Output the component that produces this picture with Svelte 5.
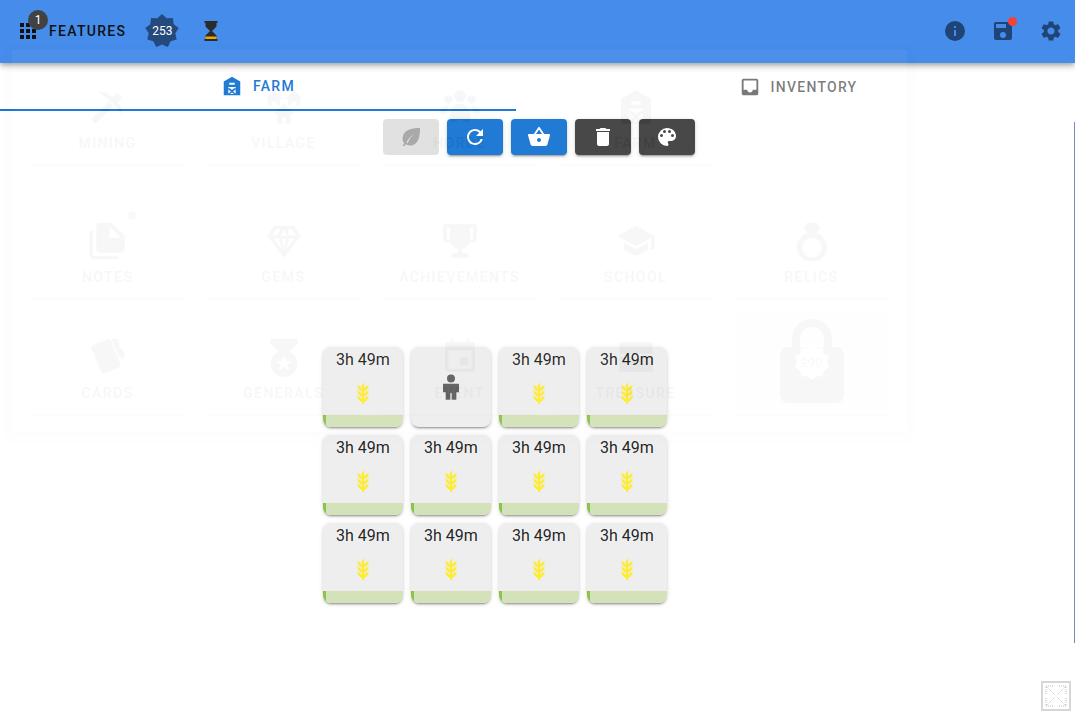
<script>
  const features = [
    { name: 'MINING', icon: 'mining' },
    { name: 'VILLAGE', icon: 'village' },
    { name: 'HORDE', icon: 'horde' },
    { name: 'FARM', icon: 'barn' },
    { name: '', icon: '' },
    { name: 'NOTES', icon: 'notes', dot: true },
    { name: 'GEMS', icon: 'gems' },
    { name: 'ACHIEVEMENTS', icon: 'trophy' },
    { name: 'SCHOOL', icon: 'school' },
    { name: 'RELICS', icon: 'ring' },
    { name: 'CARDS', icon: 'cards' },
    { name: 'GENERALS', icon: 'medal' },
    { name: 'EVENT', icon: 'event' },
    { name: 'TREASURE', icon: 'treasure' }
  ]

  const paths = {
    mining: 'M14.8 6.100 17.500 3.400l3.100 3.100-2.700 2.700c1.600 2 2.700 4.600 3.100 7.800-2.300-3-4.400-5.400-7-7.800-2.400-2.400-4.800-4.300-7.900-6.500 3.200.3 5.700 1.200 7.700 2.900zM12.600 8.800l2.600 2.600L4.600 22 2 19.400z',
    village: 'M6 2 1 7h1.500v4h2V8.500h3V11h2V7H11zM18 2l-5 5h1.500v4h2V8.500h3V11h2V7H23zM12 10l-6 6h2v6h3v-4h2v4h3v-6h2z',
    horde: 'M12 2a3.500 3.500 0 1 1 0 7 3.500 3.500 0 0 1 0-7zM5 5a2.500 2.500 0 1 1 0 5 2.500 2.500 0 0 1 0-5zM19 5a2.500 2.500 0 1 1 0 5 2.500 2.500 0 0 1 0-5zM12 10c3 0 6 3 6 6v3c0 1.500-1 2-2 2-1.500 0-2.500-1.500-4-1.500S9.500 21 8 21c-1 0-2-.5-2-2v-3c0-3 3-6 6-6zM4 11.500c.5 0 1 .1 1.300.2C4.500 13 4 14.500 4 16H0v-1c0-2 2-3.500 4-3.500zM20 11.500c2 0 4 1.500 4 3.500v1h-4c0-1.500-.5-3-1.300-4.300.3-.1.8-.2 1.300-.2z',
    barn: 'M12 2 3 7v15h18V7zM9 8.500h6v2H9zM8 13h8v1.500h-1.600L12 16.300l-2.400-1.800H8zm0 2.500 2.800 2.500L8 20.500zm8 0v5l-2.800-2.500zM12 19l2.200 1.800H9.800z',
    notes: 'M3 6H1v15c0 1.100.9 2 2 2h15v-2H3zM14 1H7C5.900 1 5 1.900 5 3v14c0 1.100.9 2 2 2h13c1.100 0 2-.9 2-2V9zm-1 9V3l7 7z',
    gems: 'M6 3h12l4 6-10 13L2 9zm1 2L4.800 8.500h3.500L9.800 5zm5 0-2 4h4zM5.500 10.500 10.800 17 9 10.500zm5.400 0 1.100 7.500 1.100-7.500zm4.100 0L13.200 17l5.300-6.500zm-.3-2h4.500L16.500 5h-2.300z',
    trophy: 'M2 2h20v8c0 2-1.500 3-3 3h-1.300c-.9 2-2.700 3.300-4.700 3.700V19h4v3H7v-3h4v-2.300C9 16.300 7.200 15 6.300 13H5c-1.500 0-3-1-3-3zm2 2v6c0 .6.400 1 1 1h1V4zm14 0v7h1c.6 0 1-.4 1-1V4z',
    school: 'M5 13.200v4L12 21l7-3.800v-4L12 17zM12 3 1 9l11 6 9-4.900V17h2V9z',
    ring: 'M9 1h6l2 3-2.500 3.400C18.800 8.500 21 12 21 15.500a9 9 0 0 1-18 0C3 12 5.200 8.500 9.500 7.400L7 4zM12 10a6 6 0 1 0 0 12 6 6 0 0 0 0-12z',
    cards: 'M11.500 1.500 3.200 4.900c-.9.400-1.300 1.400-1 2.300l5.600 13.500c.4.900 1.400 1.300 2.300 1l8.300-3.400c.9-.4 1.300-1.400 1-2.300L13.800 2.500c-.4-.9-1.400-1.300-2.300-1zM15.500 2l5 12.200 1.500-3.600c.3-.6 0-1.300-.6-1.600zM14 1l4.800 11.500V3c0-1-1-2-2-2z',
    medal: 'M4 1h16v3l-5 4.500a8 8 0 1 1-6 0L4 4zm8 10-1.400 3.200-3.400.3 2.600 2.200-.8 3.300 3-1.800 3 1.800-.8-3.300 2.600-2.200-3.400-.3z',
    event: 'M17 12h-5v5h5zM16 1v2H8V1H6v2H5C3.900 3 3 3.900 3 5v14c0 1.100.9 2 2 2h14c1.100 0 2-.9 2-2V5c0-1.100-.9-2-2-2h-1V1zm3 18H5V8h14z',
    treasure: 'M4 3h16a2 2 0 0 1 2 2v5H2V5a2 2 0 0 1 2-2zM2 12h8v2h4v-2h8v9H2z'
  }

  const barley = 'M7.33 18.330C6.500 17.170 6.500 15.830 6.500 14.500c1.670 1 3.330 2 4.170 3.170L11 18.230V15.950c-1.500-.9-2.920-1.820-3.670-2.870C6.500 11.920 6.500 10.580 6.500 9.250c1.670 1 3.330 2 4.170 3.170L11 13V10.700C9.500 9.800 8.080 8.880 7.330 7.830 6.500 6.670 6.500 5.330 6.500 4c1.670 1 3.330 2 4.170 3.170.1.140.19.290.27.450-.17-.62-.28-1.200-.29-1.800-.01-1.510.65-3.060 1.310-4.610.69 1.480 1.380 2.970 1.390 4.480.01.630-.1 1.270-.28 1.900.08-.14.160-.28.260-.42C14.170 6 15.830 5 17.500 4c0 1.330 0 2.670-.83 3.830-.75 1.050-2.170 1.970-3.670 2.870V13l.33-.58c.84-1.170 2.500-2.170 4.170-3.170 0 1.330 0 2.670-.83 3.830-.75 1.050-2.170 1.970-3.670 2.870v2.280l.33-.56c.84-1.170 2.500-2.170 4.170-3.170 0 1.330 0 2.670-.83 3.830-.75 1.050-2.170 1.970-3.670 2.870V23h-2v-1.800c-1.500-.9-2.920-1.820-3.670-2.870z'

  // spiky round badge used behind level numbers
  function star(n, cx, cy, outer, inner) {
    const pts = []
    for (let i = 0; i < n * 2; i++) {
      const r = i % 2 ? inner : outer
      const a = (Math.PI * i) / n - Math.PI / 2
      pts.push((cx + r * Math.cos(a)).toFixed(2) + ',' + (cy + r * Math.sin(a)).toFixed(2))
    }
    return pts.join(' ')
  }

  const plots = Array.from({ length: 12 }, (_, i) => ({ id: i, worker: i === 1 }))
</script>

<div class="page">
  <main class="content">
    <nav class="tabs">
      <div class="tab active">
        <svg class="tab-icon" viewBox="0 0 24 24"><path d={paths.barn} /></svg>
        <span>FARM</span>
      </div>
      <div class="tab">
        <svg class="tab-icon" viewBox="0 0 24 24"><path d="M19 3H5a2 2 0 0 0-2 2v14c0 1.100.9 2 2 2h14a2 2 0 0 0 2-2V5a2 2 0 0 0-2-2zm0 12h-4c0 1.660-1.350 3-3 3s-3-1.340-3-3H5V5h14z" /></svg>
        <span>INVENTORY</span>
      </div>
    </nav>

    <div class="actions">
      <button class="btn off" aria-label="fertilize">
        <svg viewBox="0 0 24 24"><path fill-rule="evenodd" d="M21 3C12 3 5 5 3.700 12c-.5 3 .4 5 1.500 6.200L3.500 21h1.800l1.500-1.800c1.600 1 3.700 1.500 6.200 1C19.500 19 21 11 21 3zM7.500 17.500C9 14 11.500 11 15.500 8.500 12 11.500 10 14.500 8.800 18.300z" /></svg>
      </button>
      <button class="btn blue" aria-label="replant">
        <svg viewBox="0 0 24 24"><path d="M17.650 6.350A7.958 7.958 0 0 0 12 4c-4.420 0-7.990 3.580-7.990 8s3.570 8 7.990 8c3.730 0 6.840-2.550 7.730-6h-2.080A5.990 5.990 0 0 1 12 18c-3.310 0-6-2.690-6-6s2.690-6 6-6c1.660 0 3.140.69 4.220 1.780L13 11h7V4z" /></svg>
      </button>
      <button class="btn blue" aria-label="harvest">
        <svg viewBox="0 0 24 24"><path d="M17.210 9l-4.380-6.560a1 1 0 0 0-1.660 0L6.790 9H2c-.55 0-1 .45-1 1 0 .09.010.18.040.27l2.540 9.270c.23.840 1 1.460 1.920 1.460h13c.92 0 1.690-.62 1.930-1.460l2.540-9.270L23 10c0-.55-.45-1-1-1zM9 9l3-4.400L15 9zm3 8c-1.100 0-2-.9-2-2s.9-2 2-2 2 .9 2 2-.9 2-2 2z" /></svg>
      </button>
      <button class="btn dark" aria-label="delete">
        <svg viewBox="0 0 24 24"><path d="M6 19c0 1.100.9 2 2 2h8c1.100 0 2-.9 2-2V7H6zM19 4h-3.500l-1-1h-5l-1 1H5v2h14z" /></svg>
      </button>
      <button class="btn dark" aria-label="palette">
        <svg viewBox="0 0 24 24"><path d="M12 3a9 9 0 0 0 0 18c.83 0 1.500-.67 1.500-1.500 0-.39-.15-.74-.39-1.010-.23-.26-.38-.61-.38-.99 0-.83.67-1.500 1.500-1.500H16c2.760 0 5-2.240 5-5 0-4.420-4.030-8-9-8zm-5.500 9a1.500 1.500 0 1 1 0-3 1.500 1.500 0 0 1 0 3zm3-4a1.500 1.500 0 1 1 0-3 1.500 1.500 0 0 1 0 3zm5 0a1.500 1.500 0 1 1 0-3 1.500 1.500 0 0 1 0 3zm3 4a1.500 1.500 0 1 1 0-3 1.500 1.500 0 0 1 0 3z" /></svg>
      </button>
    </div>

    <div class="field">
      {#each plots as plot (plot.id)}
        <div class="plot" class:worker={plot.worker}>
          {#if plot.worker}
            <svg class="person" viewBox="0 0 24 24"><path d="M12 2.600a3 3 0 1 1 0 6 3 3 0 0 1 0-6zM6 9.500h12v6.500h-2v5.500h-3.500v-5h-1v5H8V16H6z" /></svg>
          {:else}
            <div class="time">3h 49m</div>
            <svg class="wheat" viewBox="0 0 24 24"><path d={barley} /></svg>
            <div class="progress"><div class="fill" style="width: {4}%"></div></div>
          {/if}
        </div>
      {/each}
    </div>
  </main>

  <header class="bar">
    <div class="features-btn">
      <svg class="grid-icon" viewBox="0 0 24 24"><path d="M4 8h4V4H4zm6 12h4v-4h-4zm-6 0h4v-4H4zm0-6h4v-4H4zm6 0h4v-4h-4zm6-10v4h4V4zm-6 4h4V4h-4zm6 6h4v-4h-4zm0 6h4v-4h-4z" /></svg>
      <span class="count">1</span>
      <span class="features-label">FEATURES</span>
    </div>
    <div class="level">
      <svg viewBox="0 0 34 34"><polygon points={star(9, 17, 17, 17, 13.500)} /></svg>
      <span>253</span>
    </div>
    <svg class="glass" viewBox="0 0 24 24">
      <path fill="#2b2b2b" d="M5.500 2h13v2h-1v3.500L13 12l4.500 4.500V20h1v2h-13v-2h1v-3.500L11 12 6.500 7.500V4h-1z" />
      <rect x="6.500" y="17.500" width="11" height="2.500" fill="#f0a500" />
    </svg>
    <div class="spacer"></div>
    <svg class="bar-icon" viewBox="0 0 24 24"><path d="M12 2a10 10 0 1 0 0 20 10 10 0 0 0 0-20zm1 15h-2v-6h2zm0-8h-2V7h2z" /></svg>
    <div class="save">
      <svg class="bar-icon" viewBox="0 0 24 24"><path d="M17 3H5a2 2 0 0 0-2 2v14c0 1.100.9 2 2 2h14c1.100 0 2-.9 2-2V7zm-5 16a3 3 0 1 1 0-6 3 3 0 0 1 0 6zm3-10H5V5h10z" /></svg>
      <span class="save-dot"></span>
    </div>
    <svg class="bar-icon" viewBox="0 0 24 24"><path d="M19.140 12.940c.04-.3.060-.61.060-.94 0-.32-.020-.64-.070-.94l2.030-1.580a.49.490 0 0 0 .12-.61l-1.920-3.320a.488.488 0 0 0-.59-.22l-2.390.96c-.5-.38-1.030-.7-1.620-.94l-.36-2.540a.484.484 0 0 0-.48-.41h-3.840c-.24 0-.43.170-.47.410l-.36 2.540c-.59.240-1.130.570-1.620.94l-2.390-.96c-.22-.080-.47 0-.59.220L2.740 8.870c-.12.210-.080.470.12.610l2.030 1.580c-.05.300-.09.630-.09.940s.020.640.070.940l-2.030 1.580a.49.490 0 0 0-.12.610l1.920 3.320c.12.220.370.290.590.220l2.390-.96c.5.380 1.030.7 1.620.94l.36 2.540c.05.240.240.410.48.410h3.840c.24 0 .44-.17.470-.41l.36-2.540c.59-.24 1.130-.56 1.620-.94l2.390.96c.22.080.47 0 .59-.22l1.920-3.320c.12-.22.070-.47-.12-.61zM12 15.600c-1.980 0-3.600-1.620-3.600-3.600s1.620-3.600 3.600-3.600 3.600 1.620 3.600 3.600-1.620 3.600-3.600 3.600z" /></svg>
  </header>

  <!-- feature menu fading out, lies over everything -->
  <section class="menu">
    {#each features as f}
      {#if f.name}
        <div class="feature">
          <div class="feature-icon">
            <svg viewBox="0 0 24 24"><path d={paths[f.icon]} /></svg>
            {#if f.dot}<span class="feature-dot"></span>{/if}
          </div>
          <div class="feature-name">{f.name}</div>
        </div>
      {:else}
        <div></div>
      {/if}
    {/each}
    <div class="feature locked">
      <svg class="lock" viewBox="0 0 96 96">
        <path d="M72 32h-4V24C68 12.960 59.040 4 48 4S28 12.960 28 24v8h-4c-4.400 0-8 3.600-8 8v40c0 4.400 3.600 8 8 8h48c4.400 0 8-3.600 8-8V40c0-4.400-3.600-8-8-8zM36 32V24c0-6.640 5.360-12 12-12s12 5.360 12 12v8z" />
        <polygon class="lock-star" points={star(10, 48, 47, 18, 15)} />
      </svg>
      <span class="lock-cost">290</span>
    </div>
  </section>

  <div class="edge"></div>

  <div class="fullscreen">
    <svg viewBox="0 0 26 26" fill="none" stroke="#bdbdbd" stroke-width="1" stroke-dasharray="1 1">
      <path d="M3 11V3h8M3 3l8 8M23 11V3h-8M23 3l-8 8M3 15v8h8M3 23l8-8M23 15v8h-8M23 23l-8-8" />
    </svg>
  </div>
</div>

<style>
  :global(body) {
    margin: 0;
    background: #fff;
  }
  .page {
    position: relative;
    width: 1075px;
    height: 715px;
    overflow: hidden;
    font-family: Roboto, 'Liberation Sans', sans-serif;
    color: rgba(0, 0, 0, 0.87);
  }

  .bar {
    position: absolute;
    top: 0;
    left: 0;
    right: 0;
    height: 63px;
    box-sizing: border-box;
    padding: 0 12px 1px 16px;
    display: flex;
    align-items: center;
    background: #468cea;
    box-shadow: 0 2px 4px -1px rgba(0, 0, 0, 0.2), 0 4px 5px rgba(0, 0, 0, 0.14), 0 1px 10px rgba(0, 0, 0, 0.12);
  }
  .features-btn {
    position: relative;
    display: flex;
    align-items: center;
  }
  .grid-icon {
    width: 24px;
    height: 24px;
    fill: #111;
  }
  .count {
    position: absolute;
    left: 12px;
    top: -9px;
    width: 20px;
    height: 20px;
    border-radius: 50%;
    background: #424242;
    color: #fff;
    font-size: 12px;
    line-height: 20px;
    text-align: center;
  }
  .features-label {
    margin-left: 9px;
    font-size: 14px;
    font-weight: 500;
    letter-spacing: 1.3px;
    color: #111;
  }
  .level {
    position: relative;
    margin-left: 19px;
    width: 34px;
    height: 34px;
    display: flex;
    align-items: center;
    justify-content: center;
  }
  .level svg {
    position: absolute;
    inset: 0;
    width: 100%;
    height: 100%;
    fill: #24497d;
  }
  .level span {
    position: relative;
    font-size: 12px;
    color: #fff;
  }
  .glass {
    margin-left: 20px;
    width: 24px;
    height: 24px;
  }
  .spacer {
    flex: 1;
  }
  .bar-icon {
    width: 24px;
    height: 24px;
    fill: #1f4477;
    display: block;
    margin-left: 24px;
  }
  .save {
    position: relative;
  }
  .save-dot {
    position: absolute;
    right: -2px;
    top: -2px;
    width: 9px;
    height: 9px;
    border-radius: 50%;
    background: #f44336;
  }

  .content {
    padding-top: 63px;
  }
  .tabs {
    display: flex;
    height: 48px;
  }
  .tab {
    flex: 0 0 564px;
    box-sizing: border-box;
    display: flex;
    align-items: center;
    justify-content: center;
    gap: 10px;
    font-size: 14px;
    font-weight: 500;
    letter-spacing: 1.25px;
    color: rgba(0, 0, 0, 0.54);
  }
  .tab.active {
    flex-basis: 516px;
    color: #1976d2;
    border-bottom: 2px solid #1976d2;
  }
  .tab-icon {
    width: 22px;
    height: 22px;
    fill: currentColor;
  }
  .tab:not(.active) .tab-icon {
    fill: #757575;
  }
  .actions {
    display: flex;
    justify-content: center;
    gap: 8px;
    margin-top: 8px;
    margin-left: 2px;
  }
  .btn {
    width: 56px;
    height: 36px;
    padding: 0;
    border: 0;
    border-radius: 4px;
    display: flex;
    align-items: center;
    justify-content: center;
    box-shadow: 0 3px 1px -2px rgba(0, 0, 0, 0.2), 0 2px 2px rgba(0, 0, 0, 0.14), 0 1px 5px rgba(0, 0, 0, 0.12);
  }
  .btn svg {
    width: 24px;
    height: 24px;
    fill: #fff;
  }
  .btn.blue {
    background: #1976d2;
  }
  .btn.dark {
    background: #424242;
  }
  .btn.off {
    background: #e0e0e0;
    box-shadow: none;
  }
  .btn.off svg {
    fill: #a6a6a6;
  }

  .field {
    display: grid;
    grid-template-columns: repeat(4, 80px);
    grid-auto-rows: 80px;
    gap: 8px;
    margin: 192px 0 0 323px;
  }
  .plot {
    position: relative;
    overflow: hidden;
    border-radius: 8px;
    background: #eee;
    display: flex;
    flex-direction: column;
    align-items: center;
    box-shadow: 0 3px 1px -2px rgba(0, 0, 0, 0.2), 0 2px 2px rgba(0, 0, 0, 0.14), 0 1px 5px rgba(0, 0, 0, 0.12);
  }
  .plot.worker {
    justify-content: center;
  }
  .time {
    margin-top: 3px;
    font-size: 16px;
    line-height: 20px;
    color: rgba(0, 0, 0, 0.87);
  }
  .wheat {
    margin-top: 11px;
    width: 24px;
    height: 24px;
    fill: #fdeb3b;
  }
  .person {
    width: 32px;
    height: 32px;
    fill: #616161;
  }
  .progress {
    position: absolute;
    left: 0;
    right: 0;
    bottom: 0;
    height: 12px;
    background: #d3e2b8;
  }
  .fill {
    height: 100%;
    background: #8bc34a;
  }

  .menu {
    position: absolute;
    left: 12px;
    top: 50px;
    width: 895px;
    height: 382px;
    box-sizing: border-box;
    padding: 12px 0 0 7.5px;
    display: grid;
    grid-template-columns: repeat(5, 176px);
    grid-template-rows: 104px 122px 104px;
    align-content: start;
    row-gap: 12px;
    opacity: 0.03;
    background: #fff;
    box-shadow: 0 3px 8px rgba(0, 0, 0, 0.3);
    pointer-events: none;
  }
  .feature {
    position: relative;
    margin: 0 11.5px;
    display: flex;
    flex-direction: column;
    align-items: center;
    justify-content: flex-end;
    border-bottom: 2px solid #bbb;
    padding-bottom: 11px;
    box-sizing: border-box;
  }
  .feature-icon {
    position: relative;
    width: 40px;
    height: 40px;
  }
  .feature-icon svg {
    width: 40px;
    height: 40px;
    fill: #222;
  }
  .feature-dot {
    position: absolute;
    right: -9px;
    top: -10px;
    width: 9px;
    height: 9px;
    border-radius: 50%;
    background: #1976d2;
  }
  .feature-name {
    margin-top: 6px;
    font-size: 14px;
    line-height: 20px;
    font-weight: 500;
    letter-spacing: 1.4px;
    color: #222;
  }
  .locked {
    justify-content: center;
    padding: 0;
    background: rgba(0, 0, 0, 0.04);
  }
  .lock {
    width: 96px;
    height: 96px;
    fill: #222;
  }
  .lock-star {
    fill: #fff;
  }
  .lock-cost {
    position: absolute;
    left: 0;
    right: 0;
    top: 42px;
    text-align: center;
    font-size: 13px;
    line-height: 18px;
    color: #555;
  }

  .edge {
    position: absolute;
    right: 0;
    top: 122px;
    width: 1px;
    height: 521px;
    background: #6d8fb5;
  }
  .fullscreen {
    position: absolute;
    right: 4px;
    bottom: 4px;
    width: 30px;
    height: 30px;
    box-sizing: border-box;
    border: 2px solid #d6d6d6;
  }
  .fullscreen svg {
    display: block;
    width: 100%;
    height: 100%;
  }
</style>
